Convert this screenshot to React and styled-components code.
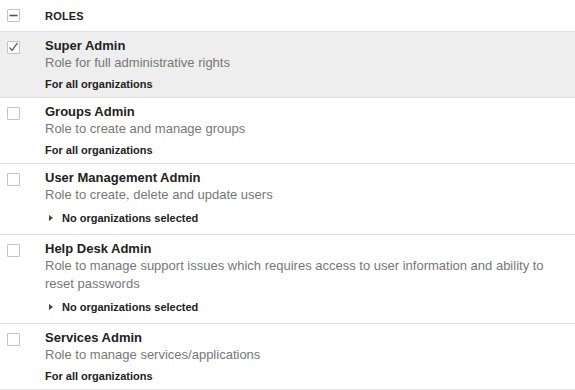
import React from "react";
import styled, { createGlobalStyle } from "styled-components";

const GlobalStyle = createGlobalStyle`
  body {
    margin: 0;
    background: #fff;
    font-family: "Liberation Sans", Arial, Helvetica, sans-serif;
  }
`;

const List = styled.div`
  width: 575px;
`;

const HeaderRow = styled.div`
  display: flex;
  align-items: center;
  height: 31px;
  border-bottom: 1px solid #e0e0e0;
`;

const BoxCell = styled.div`
  width: 45px;
  flex: none;
  padding-left: 7px;
  box-sizing: border-box;
  align-self: ${(p) => (p.top ? "flex-start" : "center")};
  padding-top: ${(p) => (p.top ? "9px" : "0")};
`;

const Box = styled.div`
  width: 13px;
  height: 13px;
  box-sizing: border-box;
  border: 1px solid #c4c4c4;
  border-radius: 1px;
  background: #fff;
  display: flex;
  align-items: center;
  justify-content: center;
`;

const HeaderLabel = styled.div`
  font-size: 11px;
  font-weight: bold;
  color: #222;
  letter-spacing: 0.2px;
`;

const Row = styled.div`
  display: flex;
  background: ${(p) => (p.selected ? "#eeeeee" : "#fff")};
  border-bottom: 1px solid #e0e0e0;
`;

const Body = styled.div`
  padding: 6px 0 6px;
  max-width: 520px;
`;

const Title = styled.div`
  font-size: 13px;
  line-height: 16px;
  font-weight: bold;
  color: #222;
`;

const Desc = styled.div`
  font-size: 13px;
  line-height: 18px;
  color: #777;
`;

const Orgs = styled.div`
  display: flex;
  align-items: center;
  font-size: 11px;
  line-height: 14px;
  font-weight: bold;
  color: #222;
  margin-top: ${(p) => (p.toggle ? "7px" : "5px")};
  margin-bottom: ${(p) => (p.toggle ? "3px" : "0")};
`;

const Caret = styled.span`
  width: 0;
  height: 0;
  border-top: 3px solid transparent;
  border-bottom: 3px solid transparent;
  border-left: 4px solid #444;
  margin: 0 9px 0 4px;
`;

const roles = [
  {
    name: "Super Admin",
    desc: "Role for full administrative rights",
    orgs: "For all organizations",
    selected: true,
  },
  {
    name: "Groups Admin",
    desc: "Role to create and manage groups",
    orgs: "For all organizations",
  },
  {
    name: "User Management Admin",
    desc: "Role to create, delete and update users",
    orgs: "No organizations selected",
    toggle: true,
  },
  {
    name: "Help Desk Admin",
    desc: "Role to manage support issues which requires access to user information and ability to reset passwords",
    orgs: "No organizations selected",
    toggle: true,
  },
  {
    name: "Services Admin",
    desc: "Role to manage services/applications",
    orgs: "For all organizations",
  },
];

function Check() {
  return (
    <svg width="11" height="11" viewBox="0 0 11 11">
      <path d="M1.5 5.5 L4 8.5 L9.5 1" fill="none" stroke="#666" strokeWidth="1.3" />
    </svg>
  );
}

function Minus() {
  return (
    <svg width="11" height="11" viewBox="0 0 11 11">
      <path d="M1.5 5.5 H9.5" stroke="#555" strokeWidth="1.6" />
    </svg>
  );
}

export default function App() {
  return (
    <>
      <GlobalStyle />
      <List>
        <HeaderRow>
          <BoxCell>
            <Box>
              <Minus />
            </Box>
          </BoxCell>
          <HeaderLabel>ROLES</HeaderLabel>
        </HeaderRow>
        {roles.map((r) => (
          <Row key={r.name} selected={r.selected}>
            <BoxCell top>
              <Box>{r.selected && <Check />}</Box>
            </BoxCell>
            <Body>
              <Title>{r.name}</Title>
              <Desc>{r.desc}</Desc>
              <Orgs toggle={r.toggle}>
                {r.toggle && <Caret />}
                {r.orgs}
              </Orgs>
            </Body>
          </Row>
        ))}
      </List>
    </>
  );
}
